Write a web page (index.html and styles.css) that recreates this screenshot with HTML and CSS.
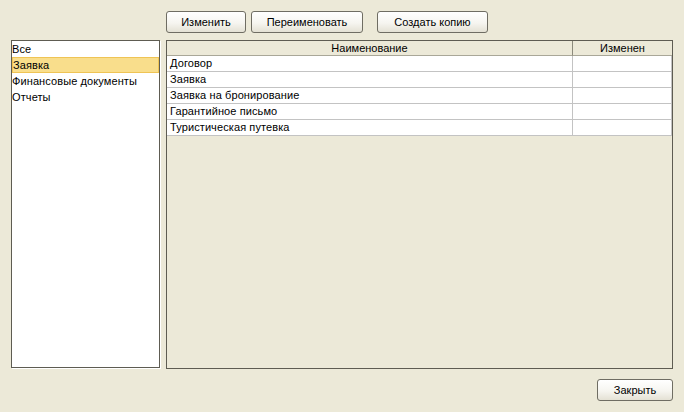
FILE: index.html
```html
<!DOCTYPE html>
<html>
<head>
<meta charset="utf-8">
<link rel="stylesheet" href="styles.css">
</head>
<body>
<div class="app">
  <div class="toolbar">
    <button class="btn btn-edit">Изменить</button>
    <button class="btn btn-rename">Переименовать</button>
    <button class="btn btn-copy">Создать копию</button>
  </div>
  <div class="main">
    <div class="list">
      <div class="item">Все</div>
      <div class="item selected">Заявка</div>
      <div class="item">Финансовые документы</div>
      <div class="item">Отчеты</div>
    </div>
    <div class="panel">
      <div class="grid">
        <div class="hcell c1">Наименование</div>
        <div class="hcell c2">Изменен</div>
        <div class="cell c1">Договор</div><div class="cell c2"></div>
        <div class="cell c1">Заявка</div><div class="cell c2"></div>
        <div class="cell c1">Заявка на бронирование</div><div class="cell c2"></div>
        <div class="cell c1">Гарантийное письмо</div><div class="cell c2"></div>
        <div class="cell c1">Туристическая путевка</div><div class="cell c2"></div>
      </div>
    </div>
  </div>
  <div class="footer">
    <button class="btn btn-close">Закрыть</button>
  </div>
</div>
</body>
</html>
```
FILE: styles.css
```css
html, body {
  margin: 0;
  padding: 0;
  background: #ece9d8;
  width: 684px;
  height: 412px;
  overflow: hidden;
}
body {
  font-family: "Liberation Sans", Arial, sans-serif;
  font-size: 11px;
  color: #000;
}
.toolbar {
  display: flex;
  padding: 11px 0 0 166px;
  height: 22px;
}
.btn {
  box-sizing: border-box;
  height: 22px;
  border: 1px solid #6f6d63;
  border-radius: 3px;
  background: linear-gradient(to bottom, #ffffff 0%, #f6f5f0 55%, #e4e1d4 100%);
  font-family: "Liberation Sans", Arial, sans-serif;
  font-size: 11px;
  color: #000;
  padding: 0;
  margin: 0;
}
.btn-edit { width: 80px; }
.btn-rename { width: 112px; margin-left: 5px; }
.btn-copy { width: 111px; margin-left: 14px; }
.main {
  display: flex;
  margin-top: 7px;
  padding-left: 11px;
}
.list {
  box-sizing: border-box;
  width: 149px;
  height: 328px;
  border: 1px solid #5e5c52;
  background: #fff;
  box-shadow: 1px 1px 0 #ffffff;
}
.item {
  height: 16px;
  line-height: 16px;
  white-space: nowrap;
  letter-spacing: 0.1px;
}
.item.selected {
  box-sizing: border-box;
  background: #f9de8c;
  border: 1px solid #efc455;
  line-height: 14px;
}
.panel {
  box-sizing: border-box;
  width: 507px;
  height: 329px;
  margin-left: 6px;
  border: 1px solid #5e5c52;
  background: #ece9d8;
}
.grid {
  display: grid;
  grid-template-columns: 406px 99px;
  grid-auto-rows: 16px;
  grid-template-rows: 15px;
}
.hcell {
  box-sizing: border-box;
  text-align: center;
  line-height: 14px;
  border-bottom: 1px solid #a9a798;
  background: #ece9d8;
}
.hcell.c1 { border-right: 1px solid #8c8a7c; }
.cell {
  box-sizing: border-box;
  background: #fff;
  line-height: 15px;
  border-bottom: 1px solid #c3c3c3;
  white-space: nowrap;
  letter-spacing: 0.1px;
}
.cell.c1 {
  padding-left: 3px;
  border-right: 1px solid #c3c3c3;
}
.cell.c2 { border-right: 1px solid #c3c3c3; }
.footer {
  display: flex;
  justify-content: flex-end;
  padding: 10px 11px 0 0;
}
.btn-close { width: 76px; }
```
